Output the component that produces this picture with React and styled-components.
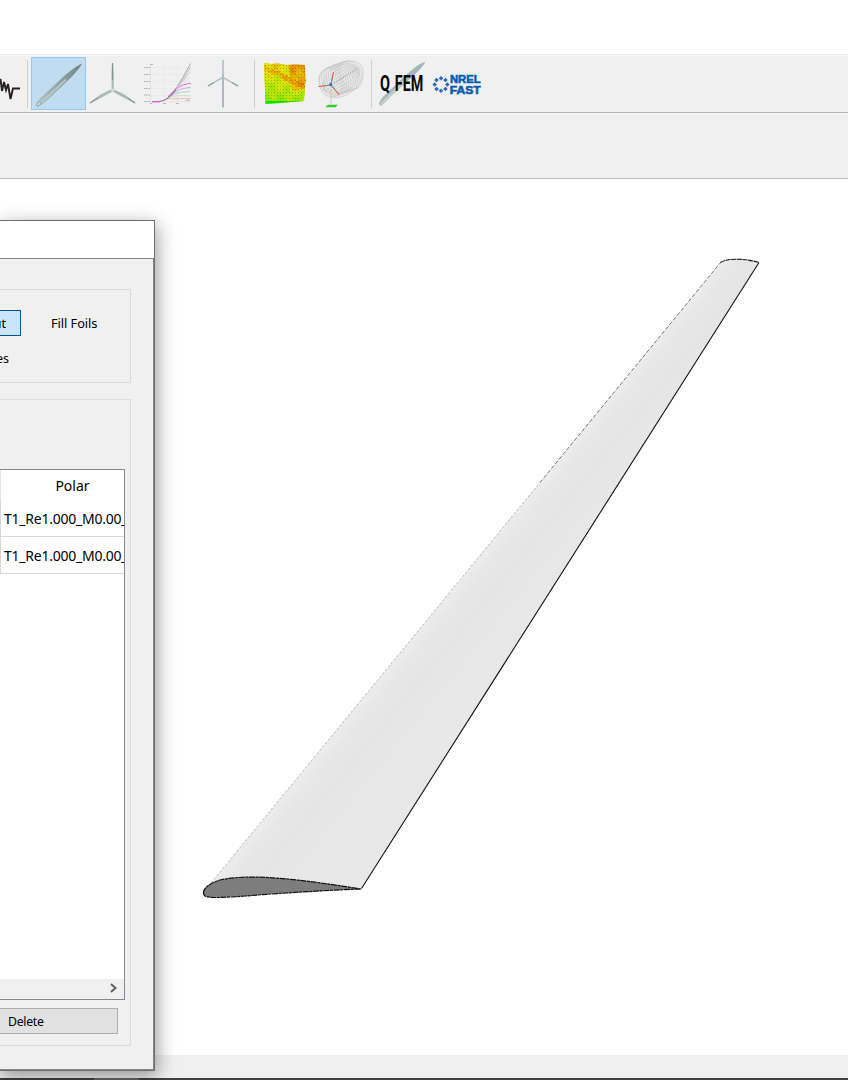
import React from "react";
import styled, { createGlobalStyle, css } from "styled-components";

const Global = createGlobalStyle`
  * { box-sizing: border-box; }
  body { margin: 0; overflow: hidden; background: #fff; font-family: "Noto Sans", "Open Sans", sans-serif; color: #000; }
  svg { display: block; flex: none; }
`;

const Window = styled.div`
  position: relative;
  display: flex;
  flex-direction: column;
  width: 848px;
  height: 1080px;
  overflow: hidden;
`;
const MenuArea = styled.header`
  height: 55px;
  background: #fff;
  border-bottom: 1px solid #ededed;
`;
const Toolbar = styled.nav`
  display: flex;
  align-items: center;
  height: 58px;
  padding-bottom: 1px;
  background: #f0f0f0;
  border-top: 1px solid #f8f8f8;
  border-bottom: 1px solid #b4b4b4;
`;
const ToolButton = styled.button`
  display: block;
  flex: none;
  width: 55px;
  height: 53px;
  padding: 0;
  border: 0;
  background: transparent;
  ${(p) => p.$active && css`
    background: #c0dcf3;
    box-shadow: inset 0 0 0 1px #90c8f6;
  `}
`;
const Divider = styled.span`
  flex: none;
  width: 1px;
  height: 48px;
  margin: 0 3px;
  background: #cfcfcf;
`;
const Ribbon = styled.div`
  height: 66px;
  background: #f0f0f0;
  border-top: 1px solid #fafafa;
  border-bottom: 1px solid #bababa;
`;
const Viewport = styled.main`
  height: 876px;
  background: #fff;
`;
const StatusBar = styled.footer`
  height: 23px;
  background: #f0f0f0;
`;
const TaskStrip = styled.div`
  display: flex;
  height: 2px;
  background: #41423f;
`;
const TaskItem = styled.div`
  width: 45px;
  margin-left: 94px;
  background: #656664;
`;

const Dialog = styled.section`
  position: absolute;
  left: -2px;
  top: 220px;
  width: 157px;
  height: 851px;
  display: flex;
  flex-direction: column;
  background: #f0f0f0;
  border: 1px solid #6d6e73;
  box-shadow: 2px 5px 18px rgba(0, 0, 0, 0.4);
`;
const DialogTitle = styled.div`
  flex: none;
  height: 37px;
  background: #fff;
`;
const DialogBody = styled.div`
  flex: 1;
  padding: 30px 22px 23px 1px;
  display: flex;
  flex-direction: column;
  gap: 16px;
  border: 1px solid #85868c;
  border-left: 0;
`;
const Group = styled.div`
  display: flex;
  flex-direction: column;
  height: ${(p) => p.$h}px;
  border: 1px solid #dcdcdc;
  border-left: 0;
  font-size: 12.5px;
  line-height: 16px;
`;
const ActionRow = styled.div`
  display: flex;
  align-items: center;
  height: 26px;
  margin-top: 20px;
`;
const CheckedButton = styled.button`
  width: 21px;
  height: 26px;
  padding: 1px 14px 0 0;
  display: flex;
  justify-content: flex-end;
  align-items: center;
  border: 1px solid #005499;
  border-left: 0;
  background: #cce4f7;
  font: 12.5px "Noto Sans", sans-serif;
  color: #000;
`;
const FlatLabel = styled.span`
  margin-left: 30px;
  padding-bottom: 1px;
  font-size: 12.8px;
  letter-spacing: -0.06px;
  white-space: nowrap;
`;
const SecondRow = styled.div`
  display: flex;
  margin-top: 15px;
  margin-left: -4px;
`;
const TableFrame = styled.div`
  display: flex;
  flex-direction: column;
  width: 125px;
  height: 531px;
  margin-top: 69px;
  background: #fff;
  border: 1px solid #828790;
  border-left: 0;
`;
const HeaderCell = styled.div`
  height: 30px;
  padding-left: 20px;
  border-left: 1px solid #e5e5e5;
  text-align: center;
  font-size: 14px;
  line-height: 32px;
`;
const Cell = styled.div`
  height: 37px;
  padding-left: 3px;
  overflow: hidden;
  white-space: nowrap;
  border-left: 1px solid #d8d8d8;
  border-bottom: 1px solid #d8d8d8;
  font-size: 14px;
  line-height: 37px;
  letter-spacing: -0.24px;
`;
const ScrollTrack = styled.div`
  display: flex;
  justify-content: flex-end;
  align-items: center;
  height: 20px;
  margin-top: auto;
  padding: 0 6px 2px 0;
  background: #f0f0f0;
`;
const DeleteButton = styled.button`
  width: 118px;
  height: 26px;
  margin-top: 8px;
  padding: 0 0 0 8px;
  text-align: left;
  border: 1px solid #adadad;
  border-left: 0;
  background: #e1e1e1;
  font: 12.3px "Noto Sans", sans-serif;
  letter-spacing: -0.3px;
  color: #000;
`;

const Icon = ({ x, children }) => (
  <svg width="55" height="53" viewBox={`${x} 57 55 53`}>{children}</svg>
);

const BladeIcon = () => (
  <Icon x={31}>
    <defs><linearGradient id="blade"><stop offset="0" stopColor="#b3c5c6" /><stop offset=".5" stopColor="#93a6a7" /><stop offset="1" stopColor="#6e8082" /></linearGradient></defs>
    <path d="M36.5 103 Q36.5 101.5 40 98.5 L64 76 Q76 66 82 63.5 Q80 68 71 77.5 L49 98.5 Q42 105 38 106.5 Q36.5 107 36.5 103Z" fill="url(#blade)" />
    <path d="M40 103.5 L50 94.5 L66 79.5" stroke="#bccdce" strokeWidth="1.6" fill="none" />
    <ellipse cx="38.7" cy="104" rx="2.6" ry="1.5" transform="rotate(-40 38.7 104)" fill="#cddbd6" stroke="#7f9190" strokeWidth=".7" />
  </Icon>
);
const RotorIcon = () => (
  <Icon x={86}>
    <g fill="#a9b9b8">
      <path d="M111.7 90 L111.5 74 L112.4 63 L113.2 63 L113.9 74 L113.7 90Z" />
      <path d="M112 89 L101 94.3 L89.3 102.6 L90 103.5 L102 97.2 L113 91.3Z" />
      <path d="M113 89 L124 94.3 L135.7 102.6 L135 103.5 L123 97.2 L112 91.3Z" />
    </g>
    <path d="M112.4 63V80 M90 103 L98 98 M135 103L128 98.5" stroke="#85908b" strokeWidth="1" />
    <circle cx="112.6" cy="90.2" r="1.5" fill="#d5e1de" />
  </Icon>
);
const curves = [
  ["M168 96.5 C178 88 183 77 190.5 63.5", "#b3a9ae"],
  ["M168 97 C178 89 184 78 190.5 67", "#bdb9b9"],
  ["M168 97 C178 89 184 80 190.5 71.5", "#e3caca"],
  ["M168 97 C178 88 184 80 190.5 77.5", "#c0eeee"],
  ["M168 97 C176 89 180 84.5 190.5 83.3", "#f260ef"],
  ["M168 97.5 C176 91 181 88 190.5 87.5", "#b9b4ba"],
  ["M168 98 C175 93 180 92 190.5 91.5", "#c4c3ee"],
  ["M166 98.5 C173 95.5 177 95.7 190.5 95.7", "#bcebbc"],
  ["M164 100 C168 98.5 172 98.7 190.5 98.7", "#f1b6b6"],
];
const GraphIcon = () => (
  <Icon x={141}>
    <path d="M151 67.5H190 M151 74.5H190 M151 81.5H190 M151 88.5H190 M151 95.5H190 M164.5 65V102 M177.5 65V102" stroke="#e8e8e8" strokeWidth=".8" />
    <path d="M150.5 65V101.7H190" stroke="#dedede" strokeWidth=".7" fill="none" />
    {curves.map(([d, c]) => <path key={d} d={d} stroke={c} strokeWidth="1" fill="none" />)}
    <path d="M152 101.7H158C164 101.5 170 98 176 89.5" stroke="#9b6ca7" strokeWidth="1.1" fill="none" />
    <path d="M152 101.7H160" stroke="#e254df" strokeWidth=".8" />
    <path d="M144 67.5H150 M144 74.5H150 M144 81.5H150 M144 88.5H150 M144 95H150 M144 101.5H150" stroke="#b2b2b2" strokeWidth="1.1" strokeDasharray="1.3 .4" />
    <path d="M150 64.5H153 M150 103.5H152 M163 103.5H166 M176 103.5H179 M186 100.2H190" stroke="#b0b0b0" strokeWidth=".9" />
  </Icon>
);
const TurbineIcon = () => (
  <Icon x={196}>
    <path d="M222.1 60H223.7L224 77V107.5H222Z" fill="#a9babd" />
    <path d="M222 60H224V75H222Z" fill="#b8c9cd" />
    <path d="M208 86 L222.8 77.3 L238 86" fill="none" stroke="#b0bdbd" strokeWidth="1.4" />
    <path d="M208 86 L214 82.5 M238 86 L232 82.5" stroke="#92a1a0" strokeWidth="1.2" />
  </Icon>
);

const fieldCells = [];
for (let r = 0; r < 21; r++) for (let c = 0; c < 21; c++) {
  const noise = Math.sin(c * 0.7 + r * 0.5) * 4 + Math.cos(r * 0.8 - c * 0.9) * 4 + Math.sin(c * 2.7 + r * 4.1) * 4;
  const ridge = Math.abs(r - 2 - c * 0.48) < 1.4 ? -14 : 0;
  const right = c > 12 && r < 14 ? -13 : 0;
  const hue = Math.max(27, Math.min(120, 56 + r * 1.5 - c * 0.4 + noise + ridge + right + (r >= 19 ? 36 : 0)));
  fieldCells.push({ x: 264 + c * 2, y: 63 + r * 2, hue });
}
const WindIcon = () => (
  <Icon x={258}>
    <defs>
      <clipPath id="field"><path d="M264 63 L271 64 L278 63.5 L286 65 L294 64.5 L305 65 L305.3 78 L306.5 81 L305 84 L304 101 L292 102 L280 103 L265.5 104Z" /></clipPath>
      <pattern id="dots" x="265" y="65" width="3" height="3" patternUnits="userSpaceOnUse"><rect width="1" height="1" fill="#674f00" opacity=".34" /></pattern>
    </defs>
    <g clipPath="url(#field)">
      <rect x="264" y="63" width="43" height="42" fill="#d7dc00" />
      {fieldCells.map((p, i) => <rect key={i} x={p.x} y={p.y} width="2" height="2" fill={`hsl(${p.hue} 95% 46%)`} />)}
      <rect x="264" y="63" width="43" height="42" fill="url(#dots)" />
    </g>
  </Icon>
);
const WakeIcon = () => (
  <Icon x={313}>
    <g fill="none" stroke="#bdbdbd" strokeWidth=".4">
      <path d="M318.8 82 Q318 74 327 68 C340 61 354 58 361 65 C366 73 362 84 354 90 C345 98 333 100 325 95 Q320 91 318.8 82Z" fill="#eaeaea" stroke="#b0b0b0" />
      {[0, 1, 2, 3, 4, 5, 6, 7, 8, 9].map((i) => <ellipse key={i} cx={330.5 + i * 2.3} cy={82.5 - i * 0.85} rx={10.5} ry={15} transform={`rotate(-24 ${330.5 + i * 2.3} ${82.5 - i * 0.85})`} />)}
      {[2, 4, 6, 8].map((r) => <ellipse key={r} cx={341} cy={79} rx={20} ry={r * 1.6} transform="rotate(-31 341 79)" />)}
    </g>
    <path d="M334 83 L357 69" stroke="#a0a0a0" strokeWidth="1.6" strokeDasharray="1 1.1" />
    <path d="M331 85V104" stroke="#e1c4c4" strokeWidth="1" />
    <path d="M331 84 L333.5 72 M331 85 L318.5 86.5 M331 85 L339 94.5" stroke="#e65440" strokeWidth="1.1" />
    <path d="M331 84 L332.3 78 M331 85 L325 85.7 M331 85 L334.5 89" stroke="#59a898" strokeWidth="1.1" />
    <circle cx="330.8" cy="84.4" r="1.5" fill="#3c67d4" />
    <path d="M328 104.8H338L335.5 107.3H325Z" fill="#31cd31" />
  </Icon>
);
const FemIcon = () => (
  <Icon x={375}>
    <path d="M379 103 L382 98 Q401 79 413 69 Q420 63 425.5 62 Q422 68 413 76 L391 96 Q383 105 380 106Z" fill="#a7b7b6" />
    <path d="M381 104 L391 94 L405 81" stroke="#c5d2d0" strokeWidth="1.8" />
    <g fontFamily="Roboto, 'Liberation Sans', sans-serif" fontWeight="700" fontSize="21.6" fill="#080808">
      <text transform="translate(380 91.3) scale(.67 1)">Q</text>
      <text transform="translate(394.8 91.3) scale(.67 1)" textLength="42.5" lengthAdjust="spacingAndGlyphs">FEM</text>
    </g>
  </Icon>
);
const FastIcon = () => (
  <Icon x={430}>
    {Array.from({ length: 8 }, (_, i) => {
      const angle = i * Math.PI / 4;
      const cx = 441 + Math.cos(angle) * 6.3;
      const cy = 84.5 + Math.sin(angle) * 6.3;
      return <rect key={i} x={cx - 1.6} y={cy - 1.6} width="3.2" height="3.2" transform={`rotate(45 ${cx} ${cy})`} fill="#2869b0" />;
    })}
    <g fill="#075cad" stroke="#075cad" strokeWidth=".6" fontFamily="'Liberation Sans', sans-serif" fontWeight="700">
      <text x="450" y="83.2" fontSize="11.4" textLength="30.5" lengthAdjust="spacingAndGlyphs">NREL</text>
      <text x="449.7" y="94.4" fontSize="11.8" textLength="31" lengthAdjust="spacingAndGlyphs">FAST</text>
    </g>
  </Icon>
);

const BladeModel = () => (
  <svg width="848" height="876" viewBox="0 179 848 876">
    <defs>
      <linearGradient id="surface" gradientUnits="userSpaceOnUse" x1="213" y1="882" x2="312" y2="963">
        <stop offset="0" stopColor="#ececec" />
        <stop offset=".1" stopColor="#e7e7e7" />
        <stop offset=".25" stopColor="#e5e5e5" />
        <stop offset=".45" stopColor="#e7e7e7" />
        <stop offset="1" stopColor="#e8e8e8" />
      </linearGradient>
    </defs>
    <path d="M211 883 L721 262 Q733 257 759 262.5 L361 889 Q301 879.5 253 877.5 Q225 878 211 883Z" fill="url(#surface)" />
    <path d="M211 883 L540 482.5" stroke="#999" strokeWidth=".7" strokeDasharray="2.5 2" />
    <path d="M540 482.5 L721 262" stroke="#555" strokeWidth=".8" strokeDasharray="4 2" />
    <path d="M720.5 262.5 Q727 258.5 742 259.4 Q751 260.2 759 262.4" fill="none" stroke="#161616" strokeWidth="1.1" strokeDasharray="5 .6" />
    <path d="M759 262.5 L361.5 888.5" stroke="#111" strokeWidth="1.1" />
    <path d="M203.5 893 C203 888 211 882.3 222 879.5 C253 873.5 301 879.5 361 889 C322 890.5 283 893 245 896 C225 897.5 209 898.5 205 896 Q203.5 895 203.5 893Z" fill="#7d7d7d" stroke="#111" strokeWidth="1.2" strokeDasharray="6 .7 3 .6" />
  </svg>
);

export default function App() {
  return (
    <Window>
      <Global />
      <MenuArea />
      <Toolbar>
        <svg width="24" height="53" viewBox="0 57 24 53"><path d="M-1 84 L.5 79 L2 91 L4 82 L6 90 L8 84 L10.5 99 L13 88.5 H20" fill="none" stroke="#252021" strokeWidth="1.9" /></svg>
        <Divider />
        <ToolButton $active aria-label="Blade design"><BladeIcon /></ToolButton>
        <ToolButton aria-label="Rotor"><RotorIcon /></ToolButton>
        <ToolButton aria-label="Power curves"><GraphIcon /></ToolButton>
        <ToolButton aria-label="Turbine"><TurbineIcon /></ToolButton>
        <Divider />
        <ToolButton aria-label="Wind field"><WindIcon /></ToolButton>
        <ToolButton aria-label="Wake simulation"><WakeIcon /></ToolButton>
        <Divider />
        <ToolButton aria-label="QFEM"><FemIcon /></ToolButton>
        <ToolButton aria-label="FAST"><FastIcon /></ToolButton>
      </Toolbar>
      <Ribbon />
      <Viewport><BladeModel /></Viewport>
      <StatusBar />
      <TaskStrip><TaskItem /></TaskStrip>
      <Dialog>
        <DialogTitle />
        <DialogBody>
          <Group $h={94}>
            <ActionRow><CheckedButton>ut</CheckedButton><FlatLabel>Fill Foils</FlatLabel></ActionRow>
            <SecondRow>es</SecondRow>
          </Group>
          <Group $h={647}>
            <TableFrame>
              <HeaderCell>Polar</HeaderCell>
              <Cell>T1_Re1.000_M0.00_N9.0</Cell>
              <Cell>T1_Re1.000_M0.00_N9.0</Cell>
              <ScrollTrack>
                <svg width="9" height="10" viewBox="0 0 9 10"><path d="M2 1 L6.5 5 L2 9" fill="none" stroke="#606060" strokeWidth="2" /></svg>
              </ScrollTrack>
            </TableFrame>
            <DeleteButton>Delete</DeleteButton>
          </Group>
        </DialogBody>
      </Dialog>
    </Window>
  );
}
